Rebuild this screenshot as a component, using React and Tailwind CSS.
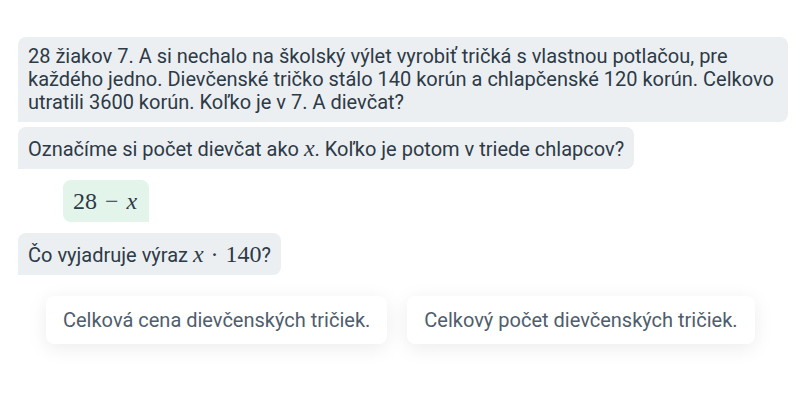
const bubble =
  'w-fit max-w-full bg-[#eceff1] text-[#2d3a47] rounded-lg rounded-bl-none px-[10px]';

function M({ children }) {
  return (
    <span className="text-[24px] leading-none" style={{ fontFamily: '"Liberation Serif", "DejaVu Serif", serif' }}>
      {children}
    </span>
  );
}

export default function App() {
  return (
    <div className="w-[800px] h-[400px] bg-white pt-[37px]" style={{ fontFamily: 'Roboto, "Noto Sans", sans-serif' }}>
      <div className="ml-[18px] w-[770px] flex flex-col text-[20px] leading-[23px]">
        {/* Task */}
        <div className={`${bubble} py-2`}>
          28 žiakov 7. A si nechalo na školský výlet vyrobiť tričká s vlastnou potlačou, pre každého jedno. Dievčenské
          tričko stálo 140 korún a chlapčenské 120 korún. Celkovo utratili 3600 korún. Koľko je v 7. A dievčat?
        </div>

        <div className={`${bubble} mt-[5px] h-[42px] flex items-center`}>
          <span>
            Označíme si počet dievčat ako <M><i>x</i></M>. Koľko je potom v triede chlapcov?
          </span>
        </div>

        {/* Answer */}
        <div className="ml-[45px] mt-[11px] w-fit h-[42px] pl-[10px] pr-[12px] flex items-center bg-[#e3f4eb] text-[#2d3a47] rounded-lg rounded-br-none">
          <M>
            28<span className="mx-[8px]">−</span><i>x</i>
          </M>
        </div>

        <div className={`${bubble} mt-[11px] h-[42px] flex items-center`}>
          <span>
            Čo vyjadruje výraz <M><i>x</i><span className="mx-[7px]">·</span>140</M>?
          </span>
        </div>

        {/* Options */}
        <div className="ml-[28px] mt-[21px] flex gap-5">
          <button className="h-12 px-[17px] bg-white rounded-lg text-[#4f5d6d] text-[20px] shadow-[0_4px_20px_rgba(0,0,0,0.08)]">
            Celková cena dievčenských tričiek.
          </button>
          <button className="h-12 px-[17px] bg-white rounded-lg text-[#4f5d6d] text-[20px] shadow-[0_4px_20px_rgba(0,0,0,0.08)]">
            Celkový počet dievčenských tričiek.
          </button>
        </div>
      </div>
    </div>
  );
}
